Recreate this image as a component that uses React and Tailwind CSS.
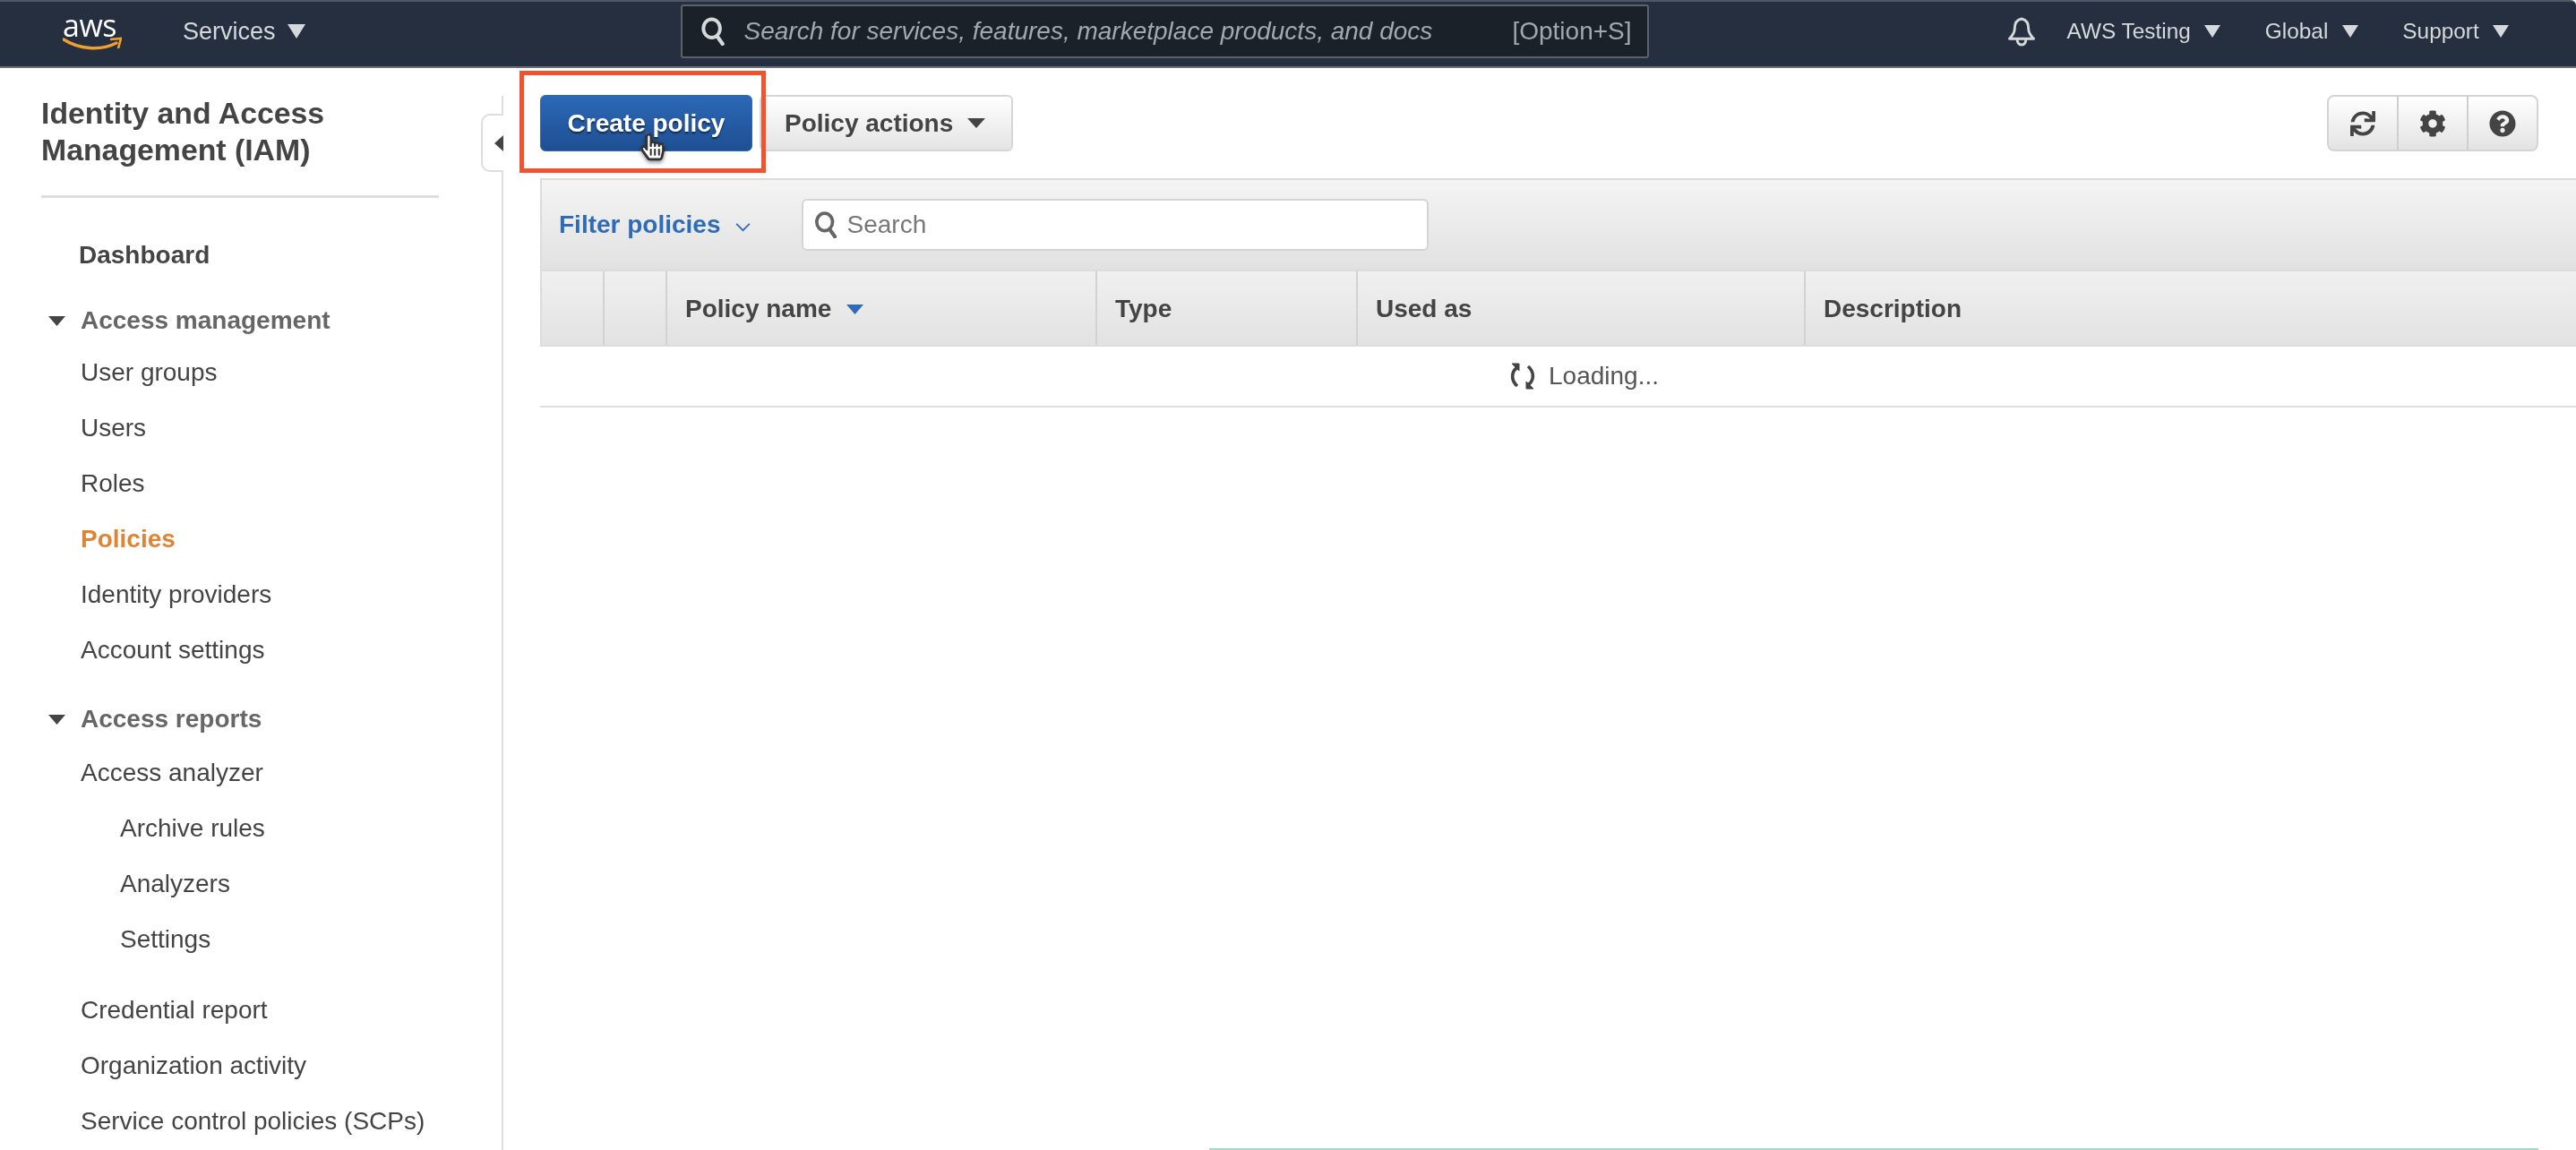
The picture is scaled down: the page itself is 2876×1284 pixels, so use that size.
import React from "react";
import { FaSync, FaCog, FaQuestionCircle, FaHandPointer, FaRegHandPointer } from "react-icons/fa";

const Caret = ({ className }) => (
  <svg viewBox="0 0 20 16" preserveAspectRatio="none" className={className}>
    <path d="M0 0H20L10 16Z" fill="currentColor" />
  </svg>
);

const SearchIcon = ({ className }) => (
  <svg viewBox="0 0 28 34" fill="none" className={className}>
    <ellipse cx="12.5" cy="13.5" rx="10" ry="11" stroke="currentColor" strokeWidth="4.2" />
    <path d="M19 23L25.5 32" stroke="currentColor" strokeWidth="4.6" strokeLinecap="round" />
  </svg>
);

const Bell = () => (
  <svg viewBox="0 0 32 34" fill="none" className="w-[32px] h-[33px] text-[#d5d9dc]" stroke="currentColor" strokeWidth="3" strokeLinejoin="round">
    <path d="M16 2C10 3 8 8 8 14C8 19 5 22 2 25H30C27 22 24 19 24 14C24 8 22 3 16 2Z" />
    <path d="M11 25C11 30 13 32 16 32C19 32 21 30 21 25" />
  </svg>
);

const Spinner = () => (
  <svg viewBox="0 0 28 30" fill="none" className="w-[28px] h-[30px] text-[#444]" stroke="currentColor" strokeWidth="3.6">
    <path d="M7 6C1 11 1 20 8 26" />
    <path d="M21 24C27 19 27 10 20 4" />
    <path d="M2 1H10V9Z" fill="currentColor" strokeWidth="1" />
    <path d="M26 29H18V21Z" fill="currentColor" strokeWidth="1" />
  </svg>
);

const Head = ({ label, className = "" }) => (
  <div className={"flex h-[56px] items-center pl-[54px] font-bold text-[#666] " + className}>
    <Caret className="w-[19px] h-[11px] mr-[17px] text-[#444]" />
    <span>{label}</span>
  </div>
);

const Item = ({ label, sub, active, className = "" }) => (
  <div className={"flex h-[62px] items-center " + (sub ? "pl-[134px] " : "pl-[90px] ") + (active ? "font-bold text-[#df8434] " : "text-[#444] ") + className}>
    {label}
  </div>
);

const Sidebar = () => (
  <aside className="relative w-[562px] shrink-0 text-[28px]">
    <div className="absolute right-0 top-[31px] bottom-0 w-[2px] bg-[#dddddd]" />
    <div className="absolute right-0 top-[51px] h-[65px] w-[25px] bg-white border-2 border-r-0 border-[#dddddd] rounded-l-[10px] flex items-center justify-end">
      <svg viewBox="0 0 10 18" className="w-[10px] h-[18px] text-[#444]"><path d="M10 0V18L0 9Z" fill="currentColor" /></svg>
    </div>
    <h1 className="pl-[46px] pt-[30px] text-[33.8px] leading-[41px] font-bold text-[#444]">
      Identity and Access<br />Management (IAM)
    </h1>
    <div className="ml-[46px] mt-[30px] w-[444px] h-[3px] bg-[#dedede]" />
    <div className="mt-[33px] flex h-[62px] items-center pl-[88px] font-bold text-[#444]">Dashboard</div>
    <Head label="Access management" className="mt-[14px]" />
    <Item label="User groups" className="-mt-[1px]" />
    <Item label="Users" />
    <Item label="Roles" />
    <Item label="Policies" active />
    <Item label="Identity providers" />
    <Item label="Account settings" />
    <Head label="Access reports" className="mt-[18px]" />
    <Item label="Access analyzer" className="mt-[1px]" />
    <Item label="Archive rules" sub />
    <Item label="Analyzers" sub />
    <Item label="Settings" sub />
    <Item label="Credential report" className="mt-[17px]" />
    <Item label="Organization activity" />
    <Item label="Service control policies (SCPs)" />
  </aside>
);

const Th = ({ w, children, last }) => (
  <div className={"flex h-full items-center pl-[20px] pt-[2px] " + (last ? "flex-1" : "border-r-2 border-[#d2d2d2] " + w)}>{children}</div>
);

export default function App() {
  return (
    <div className="relative w-[2876px] h-[1284px] overflow-hidden bg-white font-['Liberation_Sans',Arial,sans-serif] text-[#444] blur-[0.6px]">
      <header className="flex h-[76px] items-center border-t-2 border-b-2 border-t-[#4d5766] border-b-[#68707b] bg-[#252f3f] pb-[6px] text-[#d5d9dc] rounded-tr-[6px]">
        <div className="relative ml-[70px] h-[44px] w-[66px]">
          <span className="absolute left-0 top-[-5px] text-[34px] leading-[40px] tracking-[-0.5px] text-white font-['Open_Sans',sans-serif]">aws</span>
          <svg viewBox="0 0 66 16" fill="none" className="absolute left-0 top-[28px] w-[66px] h-[16px]">
            <path d="M1 3C18 14 42 16 60 7" stroke="#f0a030" strokeWidth="3.4" strokeLinecap="round" />
            <path d="M53 3L65 2L62 13" stroke="#f0a030" strokeWidth="2.6" />
          </svg>
        </div>
        <span className="ml-[68px] text-[27px] leading-none">Services</span>
        <Caret className="ml-[13px] w-[20px] h-[16px]" />
        <div className="ml-[419px] flex h-[60px] w-[1081px] items-center rounded-[3px] border-2 border-[#5a626d] bg-[#1b2129] pl-[21px] pr-[17px] text-[28px]">
          <SearchIcon className="w-[26px] h-[32px] text-[#d5d9dc]" />
          <span className="ml-[22px] italic text-[#a3a8ad]">Search for services, features, marketplace products, and docs</span>
          <span className="ml-auto text-[#a3a8ad]">[Option+S]</span>
        </div>
        <div className="ml-[400px]"><Bell /></div>
        <span className="ml-[35px] text-[24.4px] leading-none">AWS Testing</span>
        <Caret className="ml-[15px] w-[18px] h-[14px]" />
        <span className="ml-[50px] text-[24.4px] leading-none">Global</span>
        <Caret className="ml-[16px] w-[18px] h-[14px]" />
        <span className="ml-[49px] text-[24.4px] leading-none">Support</span>
        <Caret className="ml-[15px] w-[18px] h-[14px]" />
      </header>

      <div className="flex h-[1208px]">
        <Sidebar />
        <main className="flex-1 min-w-0 pl-[41px] pt-[30px] text-[28px]">
          <div className="flex h-[63px] items-stretch">
            <button className="w-[237px] rounded-[6px] border border-[#2f6bb5] bg-gradient-to-b from-[#2c68b6] to-[#1e4f93] font-bold text-white [text-shadow:0_2px_2px_rgba(0,0,0,0.55)]">
              Create policy
            </button>
            <button className="ml-[8px] flex w-[283px] items-center rounded-[6px] border-2 border-[#d6d6d6] bg-gradient-to-b from-white to-[#e4e4e4] pl-[26px] font-bold text-[#444]">
              Policy actions
              <Caret className="ml-[16px] w-[20px] h-[11px] text-[#444]" />
            </button>
            <div className="ml-auto mr-[42px] flex w-[236px] rounded-[8px] border-2 border-[#d4d4d4] bg-gradient-to-b from-white to-[#e3e3e3] text-[#444]">
              <div className="flex flex-1 items-center justify-center border-r-2 border-[#cfcfcf]"><FaSync className="w-[28px] h-[28px]" /></div>
              <div className="flex flex-1 items-center justify-center border-r-2 border-[#cfcfcf]"><FaCog className="w-[30px] h-[30px]" /></div>
              <div className="flex flex-1 items-center justify-center"><FaQuestionCircle className="w-[30px] h-[30px]" /></div>
            </div>
          </div>

          <section className="mt-[30px] border-b-0">
            <div className="flex h-[104px] items-center border-2 border-r-0 border-[#dcdcdc] bg-gradient-to-b from-[#f4f4f4] to-[#e1e1e1] pl-[19px]">
              <span className="font-bold text-[#2e6cb8]">Filter policies</span>
              <svg viewBox="0 0 20 12" fill="none" className="ml-[15px] mt-[4px] w-[19px] h-[11px] text-[#2e6cb8]"><path d="M2 2L10 10L18 2" stroke="currentColor" strokeWidth="2" /></svg>
              <div className="ml-[56px] flex h-[58px] w-[700px] items-center rounded-[6px] border-2 border-[#d4d4d4] bg-white pl-[11px]">
                <SearchIcon className="w-[28px] h-[30px] text-[#666]" />
                <span className="ml-[10px] text-[#777]">Search</span>
              </div>
            </div>
            <div className="flex h-[84px] items-center border-2 border-t-0 border-r-0 border-[#dcdcdc] bg-gradient-to-b from-[#f0f0f0] to-[#e2e2e2] font-bold">
              <div className="h-full w-[70px] border-r-2 border-[#d2d2d2]" />
              <div className="h-full w-[70px] border-r-2 border-[#d2d2d2]" />
              <Th w="w-[480px]">
                Policy name
                <Caret className="ml-[17px] w-[19px] h-[11px] text-[#2e6cb8]" />
              </Th>
              <Th w="w-[291px]">Type</Th>
              <Th w="w-[500px]">Used as</Th>
              <Th last>Description</Th>
            </div>
            <div className="flex h-[68px] items-center border-b-2 border-[#dedede] pl-[1083px]">
              <Spinner />
              <span className="ml-[15px] text-[#555]">Loading...</span>
            </div>
          </section>
        </main>
      </div>

      <div className="absolute left-[580px] top-[79px] h-[114px] w-[275px] border-[5px] border-[#f0532d]" />
      <div className="absolute left-[715px] top-[147px] text-[#333] drop-shadow-[0_2px_2px_rgba(0,0,0,0.4)]">
        <FaHandPointer className="absolute left-0 top-0 w-[27px] h-[34px] text-white" />
        <FaRegHandPointer className="relative w-[27px] h-[34px]" />
      </div>
      <div className="absolute left-[1350px] top-[1282px] h-[2px] w-[1484px] bg-[#a5d6c8]" />
    </div>
  );
}
